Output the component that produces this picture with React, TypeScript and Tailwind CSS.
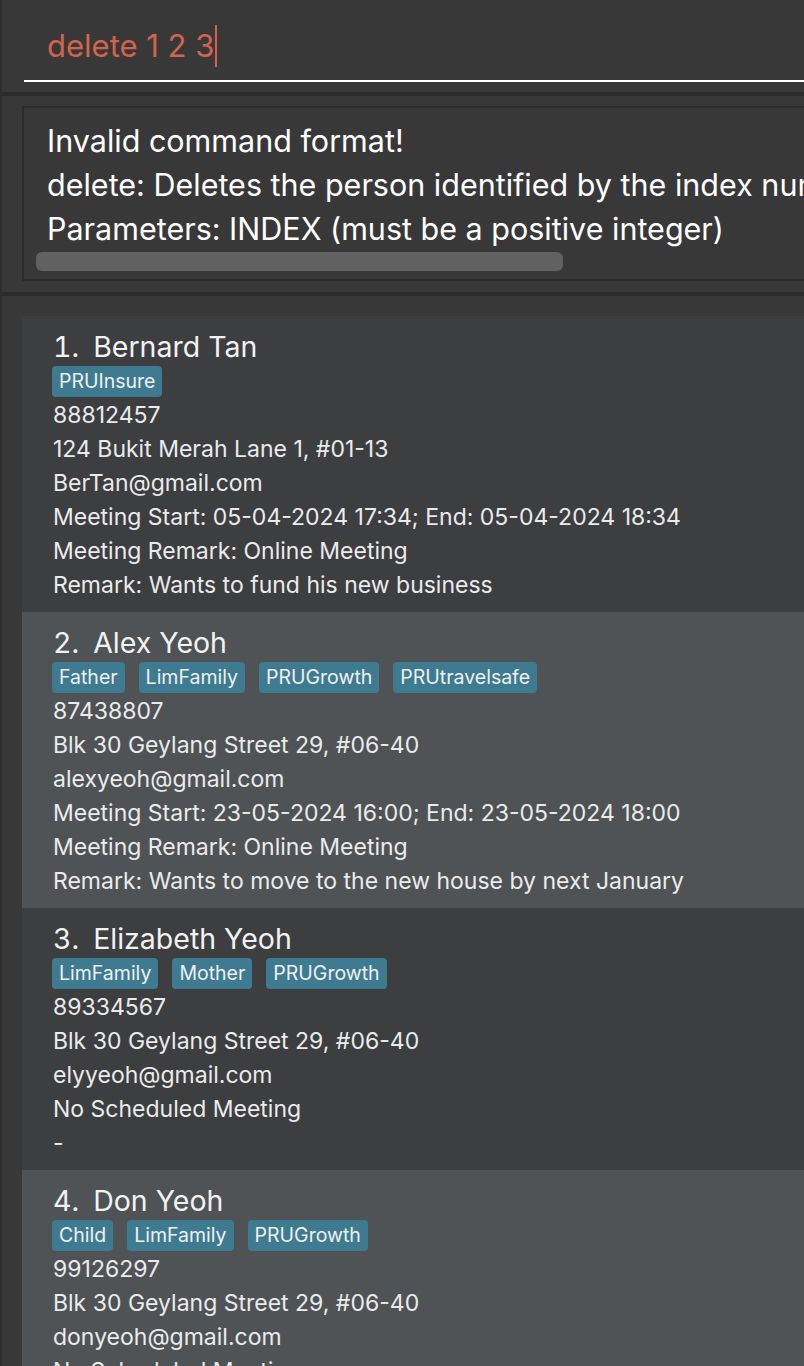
import React from "react";

type Person = {
  name: string;
  tags: string[];
  lines: string[];
};

const people: Person[] = [
  {
    name: "Bernard Tan",
    tags: ["PRUInsure"],
    lines: [
      "88812457",
      "124 Bukit Merah Lane 1, #01-13",
      "BerTan@gmail.com",
      "Meeting Start: 05-04-2024 17:34; End: 05-04-2024 18:34",
      "Meeting Remark: Online Meeting",
      "Remark: Wants to fund his new business",
    ],
  },
  {
    name: "Alex Yeoh",
    tags: ["Father", "LimFamily", "PRUGrowth", "PRUtravelsafe"],
    lines: [
      "87438807",
      "Blk 30 Geylang Street 29, #06-40",
      "alexyeoh@gmail.com",
      "Meeting Start: 23-05-2024 16:00; End: 23-05-2024 18:00",
      "Meeting Remark: Online Meeting",
      "Remark: Wants to move to the new house by next January",
    ],
  },
  {
    name: "Elizabeth Yeoh",
    tags: ["LimFamily", "Mother", "PRUGrowth"],
    lines: [
      "89334567",
      "Blk 30 Geylang Street 29, #06-40",
      "elyyeoh@gmail.com",
      "No Scheduled Meeting",
      "-",
    ],
  },
  {
    name: "Don Yeoh",
    tags: ["Child", "LimFamily", "PRUGrowth"],
    lines: [
      "99126297",
      "Blk 30 Geylang Street 29, #06-40",
      "donyeoh@gmail.com",
      "No Scheduled Meeting",
      "-",
    ],
  },
];

function Card({ p, i }: { p: Person; i: number }) {
  const bg = i % 2 === 0 ? "bg-[#3c3e40]" : "bg-[#4f5356]";
  return (
    <div className={`${bg} w-[900px] pl-[30px] pt-[14px] pb-[10px] text-[#ebebeb]`}>
      <div className="flex h-[34px] items-center text-[28.5px] leading-[34px] text-[#f2f2f2]">
        <span className="pl-[1px] tabular-nums">{i + 1}.</span>
        <span className="ml-[14px]">{p.name}</span>
      </div>
      <div className="mt-[2px] mb-[1px] flex h-[31px] gap-[14px]">
        {p.tags.map((t) => (
          <span
            key={t}
            className="h-[31px] rounded-[4px] bg-[#3e7b91] px-[7px] text-[19.5px] leading-[31px] text-[#f0f0f0]"
          >
            {t}
          </span>
        ))}
      </div>
      {p.lines.map((l, k) => (
        <div
          key={k}
          className="h-[34px] pl-[1px] text-[23px] leading-[34px] whitespace-nowrap"
        >
          {l}
        </div>
      ))}
    </div>
  );
}

export default function App() {
  return (
    <div
      className="relative h-[1366px] w-[804px] overflow-hidden border-l-2 border-[#2d2d2d] bg-[#383838]"
      style={{ fontFamily: "Inter, 'Noto Sans', sans-serif" }}
    >
      {/* command box */}
      <div className="h-[92px] pl-[22px] pt-[20px]">
        <div className="flex h-[62px] items-center border-b-2 border-white pl-[23px] pb-[8px]">
          <span className="text-[31px] leading-[42px] whitespace-nowrap text-[#d2644f]">delete 1 2 3</span>
          <span className="ml-[1px] h-[42px] w-[2px] bg-[#d2644f]" />
        </div>
      </div>
      <div className="h-[4px] bg-[#2b2b2b]" />
      {/* result display */}
      <div className="h-[196px] pl-[20px] pt-[10px]">
        <div className="h-[175px] w-[900px] border-2 border-[#2b2b2b] pl-[23px] pt-[11px] text-[30.5px] leading-[44px] text-white">
          <div className="whitespace-nowrap">Invalid command format!</div>
          <div className="whitespace-nowrap">
            delete: Deletes the person identified by the index number used in the displayed person list.
          </div>
          <div className="whitespace-nowrap">Parameters: INDEX (must be a positive integer)</div>
          <div className="-ml-[11px] mt-[1px] h-[19px] w-[527px] rounded-[6px] bg-[#616161]" />
        </div>
      </div>
      <div className="h-[4px] bg-[#2b2b2b]" />
      {/* list */}
      <div className="pl-[20px] pt-[20px]">
        {people.map((p, i) => (
          <Card key={i} p={p} i={i} />
        ))}
      </div>
    </div>
  );
}
